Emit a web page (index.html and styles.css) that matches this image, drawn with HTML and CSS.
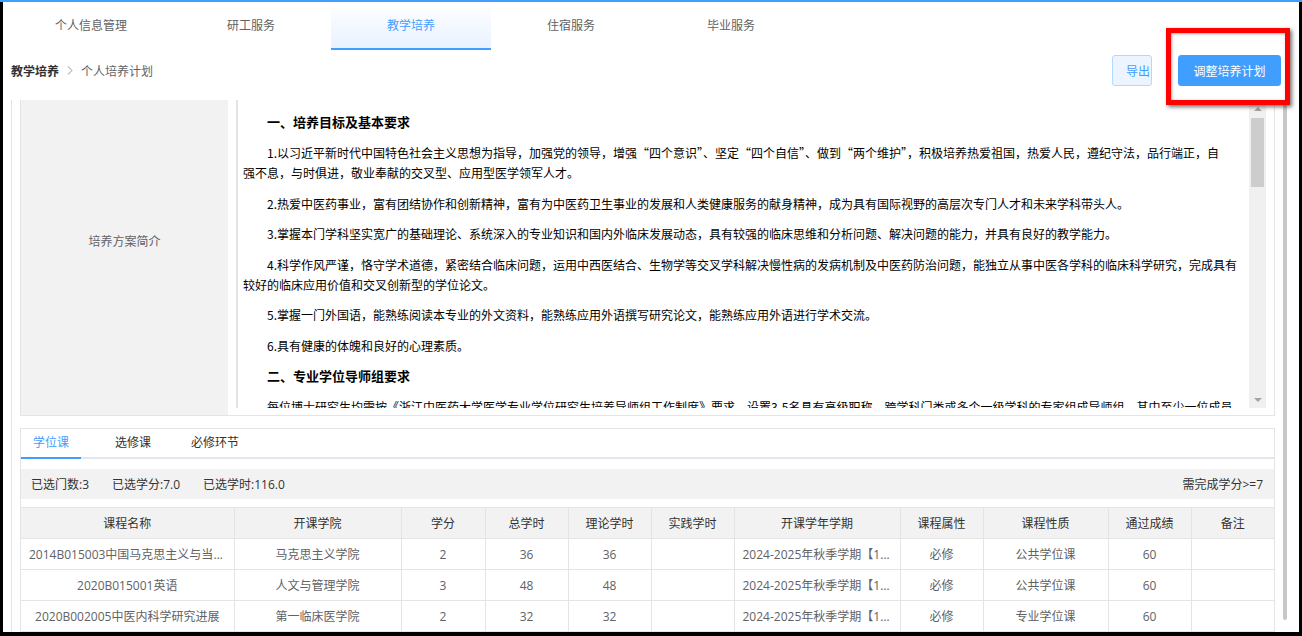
FILE: index.html
```html
<!DOCTYPE html>
<html lang="zh-CN">
<head>
<meta charset="utf-8">
<title>个人培养计划</title>
<link rel="stylesheet" href="styles.css">
</head>
<body>
<div class="topline"></div>
<div class="page">
  <nav class="nav">
    <a class="nav-item">个人信息管理</a>
    <a class="nav-item">研工服务</a>
    <a class="nav-item active">教学培养</a>
    <a class="nav-item">住宿服务</a>
    <a class="nav-item">毕业服务</a>
  </nav>

  <div class="toolbar">
    <div class="crumbs">
      <span class="crumb-root">教学培养</span>
      <svg class="crumb-sep" width="6" height="9" viewBox="0 0 6 9"><path d="M1 0.5 L5 4.5 L1 8.5" fill="none" stroke="#c0c4cc" stroke-width="1.2"/></svg>
      <span class="crumb-leaf">个人培养计划</span>
    </div>
    <div class="actions">
      <button class="btn btn-plain">导出</button>
      <button class="btn btn-primary">调整培养计划</button>
    </div>
  </div>

  <div class="main">
    <div class="content">
      <div class="intro">
        <div class="intro-label">培养方案简介</div>
        <div class="intro-value">
          <div class="doc-frame">
            <div class="doc">
              <h3>一、培养目标及基本要求</h3>
              <p>1.以习近平新时代中国特色社会主义思想为指导，加强党的领导，增强“四个意识”、坚定“四个自信”、做到“两个维护”，积极培养热爱祖国，热爱人民，遵纪守法，品行端正，自<br>强不息，与时俱进，敬业奉献的交叉型、应用型医学领军人才。</p>
              <p>2.热爱中医药事业，富有团结协作和创新精神，富有为中医药卫生事业的发展和人类健康服务的献身精神，成为具有国际视野的高层次专门人才和未来学科带头人。</p>
              <p>3.掌握本门学科坚实宽广的基础理论、系统深入的专业知识和国内外临床发展动态，具有较强的临床思维和分析问题、解决问题的能力，并具有良好的教学能力。</p>
              <p>4.科学作风严谨，恪守学术道德，紧密结合临床问题，运用中西医结合、生物学等交叉学科解决慢性病的发病机制及中医药防治问题，能独立从事中医各学科的临床科学研究，完成具有较好的临床应用价值和交叉创新型的学位论文。</p>
              <p>5.掌握一门外国语，能熟练阅读本专业的外文资料，能熟练应用外语撰写研究论文，能熟练应用外语进行学术交流。</p>
              <p>6.具有健康的体魄和良好的心理素质。</p>
              <h3>二、专业学位导师组要求</h3>
              <p>每位博士研究生均需按《浙江中医药大学医学专业学位研究生培养导师组工作制度》要求，设置3-5名具有高级职称，跨学科门类或多个一级学科的专家组成导师组，其中至少一位成员为相关学科的专家。</p>
            </div>
            <div class="vscroll">
              <div class="vs-btn"><span class="tri-up"></span></div>
              <div class="vs-thumb"></div>
              <div class="vs-rest"></div>
              <div class="vs-btn"><span class="tri-down"></span></div>
            </div>
          </div>
        </div>
      </div>

      <div class="course-box">
        <div class="tabs">
          <div class="tab active">学位课</div>
          <div class="tab tab-2">选修课</div>
          <div class="tab tab-3">必修环节</div>
        </div>
        <div class="summary">
          <span class="stat">已选门数:3</span>
          <span class="stat">已选学分:7.0</span>
          <span class="stat">已选学时:116.0</span>
          <span class="need">需完成学分&gt;=7</span>
        </div>
        <table class="grid">
          <colgroup>
            <col style="width:213px"><col style="width:167px"><col style="width:84px"><col style="width:83px"><col style="width:83px"><col style="width:83px"><col style="width:166px"><col style="width:83px"><col style="width:125px"><col style="width:83px"><col style="width:83px">
          </colgroup>
          <thead>
            <tr>
              <th>课程名称</th><th>开课学院</th><th>学分</th><th>总学时</th><th>理论学时</th><th>实践学时</th><th>开课学年学期</th><th>课程属性</th><th>课程性质</th><th>通过成绩</th><th>备注</th>
            </tr>
          </thead>
          <tbody>
            <tr>
              <td>2014B015003中国马克思主义与当代社会思潮</td><td>马克思主义学院</td><td>2</td><td>36</td><td>36</td><td></td><td>2024-2025年秋季学期【1-16周】</td><td>必修</td><td>公共学位课</td><td>60</td><td></td>
            </tr>
            <tr>
              <td>2020B015001英语</td><td>人文与管理学院</td><td>3</td><td>48</td><td>48</td><td></td><td>2024-2025年秋季学期【1-16周】</td><td>必修</td><td>公共学位课</td><td>60</td><td></td>
            </tr>
            <tr>
              <td>2020B002005中医内科学研究进展</td><td>第一临床医学院</td><td>2</td><td>32</td><td>32</td><td></td><td>2024-2025年秋季学期【1-16周】</td><td>必修</td><td>专业学位课</td><td>60</td><td></td>
            </tr>
          </tbody>
        </table>
      </div>
    </div>
    <div class="page-scroll"></div>
  </div>

  <div class="highlight"></div>
</div>
</body>
</html>
```

FILE: styles.css
```css
html, body {
  margin: 0;
  padding: 0;
}

body {
  background: #000;
  width: 1302px;
  height: 636px;
  overflow: hidden;
  font-family: "Open Sans", "Noto Sans CJK SC", sans-serif;
  font-size: 12px;
  color: #333;
}

.topline {
  height: 2px;
  background: #409eff;
}

.page {
  position: relative;
  height: 630px;
  margin: 0 3px;
  padding-left: 8px;
  background: #fff;
  overflow: hidden;
  box-sizing: border-box;
}

/* top navigation */
.nav {
  display: flex;
  height: 48px;
}

.nav-item {
  width: 160px;
  display: flex;
  align-items: center;
  justify-content: center;
  color: #606266;
  border-bottom: 2px solid transparent;
  box-sizing: border-box;
}

.nav-item.active {
  color: #409eff;
  background: linear-gradient(#ffffff, #e9f2ff);
  border-bottom-color: #409eff;
}

/* toolbar */
.toolbar {
  display: flex;
  align-items: center;
  justify-content: space-between;
  height: 31px;
  margin-top: 5px;
  margin-bottom: 14px;
  padding-right: 18px;
}

.crumbs {
  display: flex;
  align-items: center;
}

.crumb-root {
  font-weight: bold;
  color: #303133;
}

.crumb-sep {
  margin: 0 8px;
}

.crumb-leaf {
  color: #606266;
}

.actions {
  display: flex;
}

.btn {
  height: 31px;
  font-family: inherit;
  font-size: 12px;
  border-radius: 3px;
  box-sizing: border-box;
  cursor: pointer;
}

.btn-plain {
  width: 40px;
  padding: 0 0 0 13px;
  text-align: left;
  background: #ecf5ff;
  border: 1px solid #b3d8ff;
  color: #409eff;
}

.btn-primary {
  width: 103px;
  margin-left: 26px;
  padding: 0;
  background: #409eff;
  border: 1px solid #409eff;
  color: #fff;
}

/* main area */
.main {
  display: flex;
  height: 532px;
}

.content {
  width: 1255px;
  border-left: 1px solid #e4e4e4;
  padding-left: 8px;
}

.page-scroll {
  width: 4px;
  height: 520px;
  margin-left: 8px;
  background: #c8c8c8;
  border-radius: 2px;
}

/* intro panel */
.intro {
  display: flex;
  height: 316px;
  border: 1px solid #e4e4e4;
  border-top: none;
  box-sizing: border-box;
}

.intro-label {
  width: 207px;
  padding-bottom: 33px;
  display: flex;
  align-items: center;
  justify-content: center;
  background: #f2f2f2;
  color: #606266;
}

.intro-value {
  flex: 1;
  padding: 0 8px 7px 8px;
}

.doc-frame {
  display: flex;
  height: 308px;
  border-left: 2px solid #e3e3e3;
}

.doc {
  flex: 1;
  overflow: hidden;
  padding: 12px 8px 0 5px;
  font-family: "Noto Sans CJK SC", sans-serif;
  color: #000;
}

.doc h3 {
  margin: 0 0 11px;
  font-size: 13px;
  font-weight: bold;
  line-height: 20px;
  text-indent: 24px;
}

.doc p {
  margin: 0 0 10.5px;
  line-height: 20px;
  text-indent: 24px;
}

.vscroll {
  width: 17px;
  display: flex;
  flex-direction: column;
  background: #f0f0f0;
}

.vs-btn {
  height: 17px;
  display: flex;
  align-items: center;
  justify-content: center;
}

.tri-up {
  width: 0;
  height: 0;
  border-left: 4px solid transparent;
  border-right: 4px solid transparent;
  border-bottom: 4px solid #a3a3a3;
}

.tri-down {
  width: 0;
  height: 0;
  border-left: 4px solid transparent;
  border-right: 4px solid transparent;
  border-top: 4px solid #a3a3a3;
}

.vs-thumb {
  height: 69px;
  margin: 1px 2px 0;
  background: #cdcdcd;
}

.vs-rest {
  flex: 1;
}

/* course box */
.course-box {
  margin-top: 12px;
  border: 1px solid #e4e4e4;
  border-bottom: none;
}

.tabs {
  display: flex;
  height: 30px;
  border-bottom: 2px solid #e4e7ed;
  box-sizing: border-box;
}

.tab {
  padding: 0 12px;
  line-height: 28px;
  height: 28px;
  border-bottom: 2px solid transparent;
  color: #303133;
}

.tab.active {
  color: #409eff;
  border-bottom-color: #409eff;
}

.tab-2 {
  margin-left: 22px;
}

.tab-3 {
  margin-left: 16px;
}

.summary {
  display: flex;
  align-items: center;
  height: 30px;
  margin-top: 10px;
  padding: 0 11px 0 10px;
  background: #f2f2f2;
  color: #333;
}

.stat {
  margin-right: 23px;
}

.need {
  margin-left: auto;
}

.grid {
  width: 100%;
  margin-top: 8px;
  border-collapse: collapse;
  table-layout: fixed;
}

.grid th,
.grid td {
  height: 31px;
  padding: 0 8px;
  border: 1px solid #e4e4e4;
  text-align: center;
  white-space: nowrap;
  overflow: hidden;
  text-overflow: ellipsis;
  box-sizing: border-box;
}

.grid th:first-child,
.grid td:first-child {
  border-left: none;
}

.grid th:last-child,
.grid td:last-child {
  border-right: none;
}

.grid th {
  font-weight: normal;
  background: #f2f2f2;
  color: #333;
}

.grid td {
  color: #606266;
}

/* annotation overlay */
.highlight {
  position: absolute;
  left: 1163px;
  top: 26px;
  width: 124px;
  height: 77px;
  box-sizing: border-box;
  border: 5px solid #ff0000;
  box-shadow: 2px 2px 4px rgba(0, 0, 0, 0.55), inset 1px 1px 3px rgba(0, 0, 0, 0.35);
}
```
